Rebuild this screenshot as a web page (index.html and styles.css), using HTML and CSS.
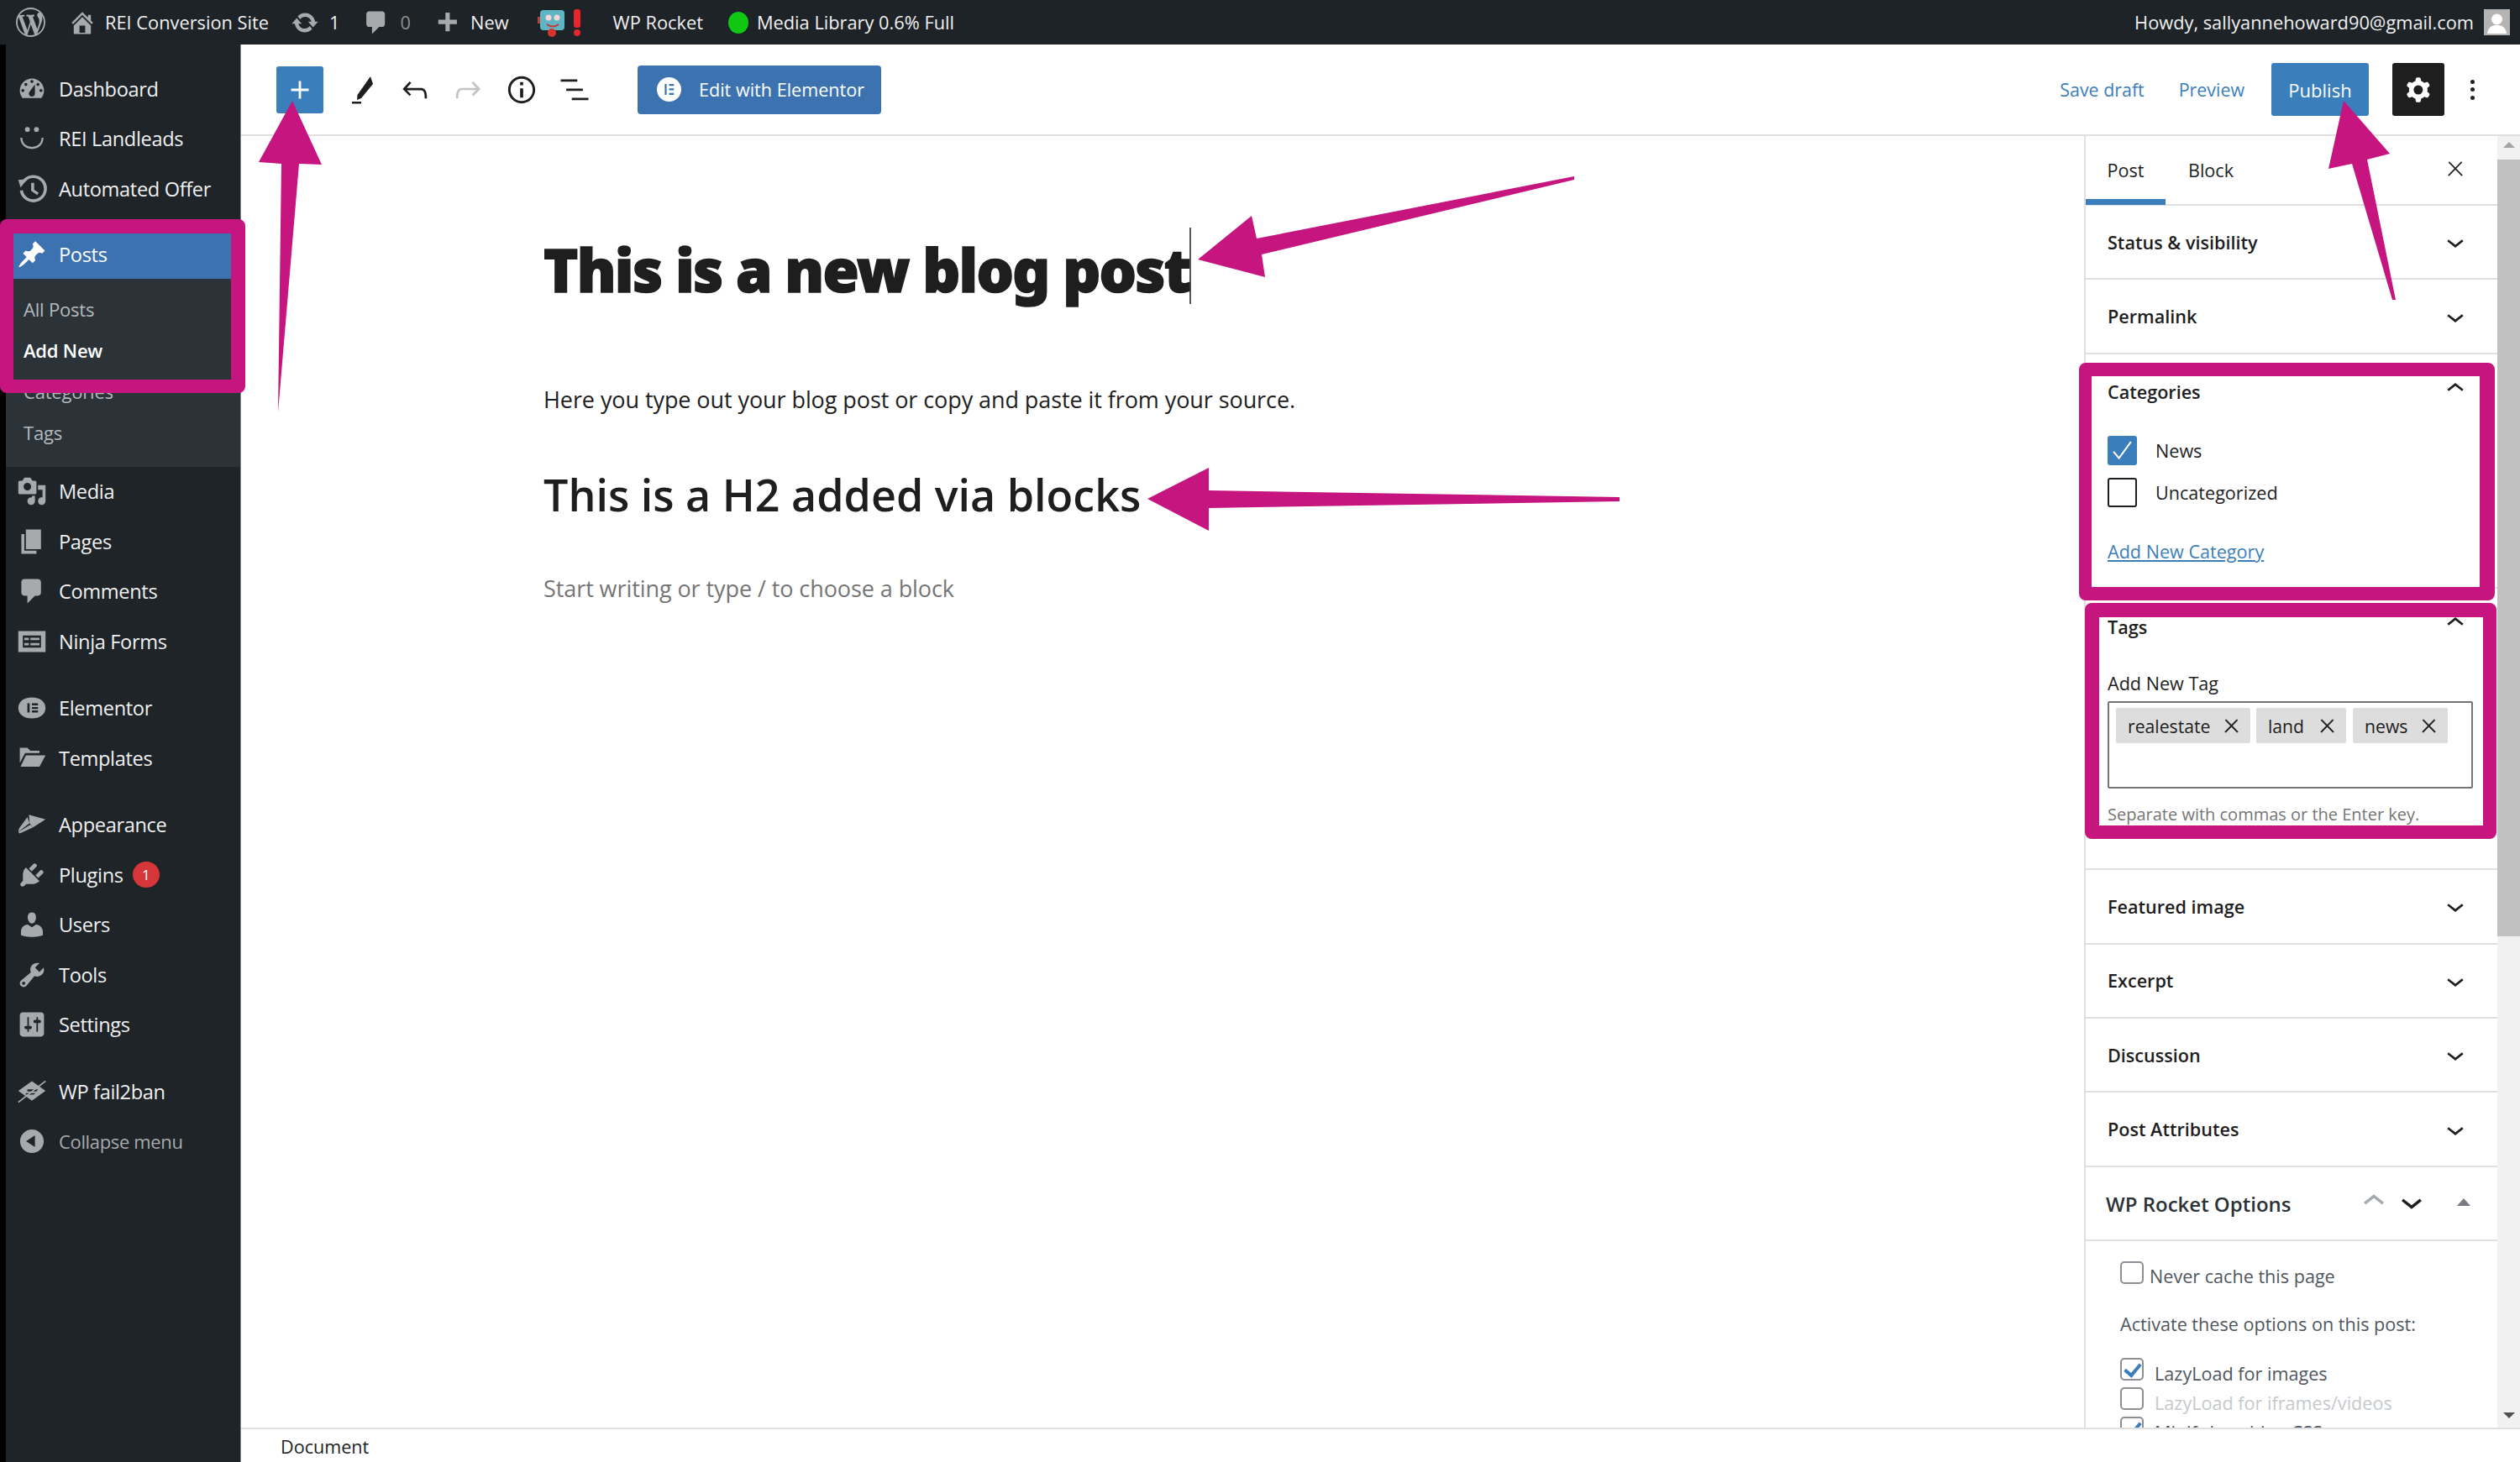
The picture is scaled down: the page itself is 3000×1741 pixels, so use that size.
FILE: index.html
```html
<!DOCTYPE html>
<html lang="en">
<head>
  <meta charset="UTF-8">
  <title>Add New Post</title>
  <link rel="stylesheet" href="styles.css">
</head>
<body>
  <svg class="sprites" width="0" height="0">
    <symbol id="chev-down" viewBox="0 0 24 24"><path d="M17.5 11.6L12 16l-5.5-4.4.9-1.2L12 14l4.5-3.6 1 1.2z"/></symbol>
    <symbol id="chev-up" viewBox="0 0 24 24"><path d="M6.5 12.4L12 8l5.5 4.4-.9 1.2L12 10l-4.5 3.6-1-1.2z"/></symbol>
    <symbol id="close" viewBox="0 0 24 24"><path d="M13 11.8l6.1-6.3-1-1-6.1 6.2-6.1-6.2-1 1 6.1 6.3-6.5 6.7 1 1 6.5-6.6 6.5 6.6 1-1z"/></symbol>
  </svg>

  <header class="adminbar">
    <svg class="ab-logo" viewBox="0 0 20 20"><path d="M20 10c0-5.51-4.49-10-10-10C4.48 0 0 4.49 0 10c0 5.52 4.48 10 10 10 5.51 0 10-4.48 10-10zM7.78 15.37L4.37 6.22c.55-.02 1.17-.08 1.17-.08.5-.06.44-1.13-.06-1.11 0 0-1.45.11-2.37.11-.18 0-.37 0-.58-.01C4.12 2.69 6.87 1.11 10 1.11c2.33 0 4.45.87 6.05 2.34-.68-.11-1.65.39-1.65 1.58 0 .74.45 1.36.9 2.1.35.61.55 1.36.55 2.46 0 1.49-1.4 5-1.4 5l-3.03-8.37c.54-.02.82-.17.82-.17.5-.05.44-1.25-.06-1.22 0 0-1.44.12-2.38.12-.87 0-2.33-.12-2.33-.12-.5-.03-.56 1.2-.06 1.22l.92.08 1.26 3.41zM17.41 10c.24-.64.74-1.87.43-4.25.7 1.29 1.05 2.71 1.05 4.25 0 3.29-1.73 6.24-4.4 7.78.97-2.59 1.94-5.2 2.92-7.78zM6.1 18.09C3.12 16.65 1.11 13.53 1.11 10c0-1.3.23-2.48.72-3.59C3.25 10.3 4.67 14.2 6.1 18.09zm4.03-6.63l2.58 6.98c-.86.29-1.76.45-2.71.45-.79 0-1.57-.11-2.29-.33.81-2.38 1.62-4.74 2.42-7.1z"/></svg>
    <div class="ab-item ab-site">
      <svg class="ab-icon" viewBox="0 0 20 20"><path d="M16 8.5l1.53 1.53-1.06 1.06L10 4.62l-6.47 6.47-1.06-1.06L10 2.5l4 4v-2h2v4zm-6-2.46l6 5.99V18H4v-5.97zM12 17v-5H8v5h4z"/></svg>
      <span>REI Conversion Site</span>
    </div>
    <div class="ab-item ab-updates">
      <svg class="ab-icon" viewBox="0 0 20 20"><path d="M10.2 3.28c3.53 0 6.43 2.61 6.92 6h2.08l-3.5 4-3.5-4h2.32c-.45-1.97-2.21-3.45-4.32-3.45-1.45 0-2.73.71-3.54 1.78L4.95 5.66C6.23 4.2 8.11 3.28 10.2 3.28zm-.4 13.44c-3.52 0-6.43-2.61-6.92-6H.8l3.5-4c1.17 1.33 2.33 2.67 3.5 4H5.48c.45 1.97 2.21 3.45 4.32 3.45 1.45 0 2.73-.71 3.54-1.78l1.71 1.95c-1.28 1.46-3.15 2.38-5.25 2.38z"/></svg>
      <span>1</span>
    </div>
    <div class="ab-item ab-comments">
      <svg class="ab-icon" viewBox="0 0 20 20"><path d="M5 2h9c1.1 0 2 .9 2 2v7c0 1.1-.9 2-2 2h-2l-5 5v-5H5c-1.1 0-2-.9-2-2V4c0-1.1.9-2 2-2z"/></svg>
      <span class="dim">0</span>
    </div>
    <div class="ab-item ab-new">
      <svg class="ab-icon" viewBox="0 0 20 20"><path d="M12 8h5v3h-5v5H9v-5H4V8h5V3h3z"/></svg>
      <span>New</span>
    </div>
    <div class="ab-item ab-rocket">
      <svg class="ab-robot" viewBox="0 0 56 34">
        <rect x="0" y="10" width="4" height="8" fill="#b8433c"/>
        <rect x="3" y="2" width="29" height="24" rx="4" fill="#5fb5c4"/>
        <circle cx="13" cy="11" r="3.5" fill="#f3d6d6"/><circle cx="23" cy="11" r="3.5" fill="#f3d6d6"/>
        <path d="M11 19q7 5 14 0" stroke="#c33" stroke-width="2" fill="none"/>
        <circle cx="17" cy="29" r="5" fill="#d9332b"/>
        <rect x="43" y="1" width="8" height="22" rx="3" fill="#e8242c"/>
        <circle cx="47" cy="29" r="4" fill="#e8242c"/>
      </svg>
      <span>WP Rocket</span>
    </div>
    <div class="ab-item ab-media">
      <i class="green-dot"></i>
      <span>Media Library 0.6% Full</span>
    </div>
    <div class="ab-item ab-howdy">
      <span>Howdy, sallyannehoward90@gmail.com</span>
      <svg class="ab-avatar" viewBox="0 0 31 31">
        <rect width="31" height="31" fill="#b4b4b4"/>
        <circle cx="15.5" cy="12" r="6.5" fill="#fff"/>
        <path d="M4 29c1-8 6-10 11.500-10S26 21 27 29z" fill="#fff"/>
      </svg>
    </div>
  </header>

  <div class="layout">
    <nav class="sidemenu">
      <a class="menu-item">
        <svg class="menu-icon" viewBox="0 0 20 20"><path d="M3.760 16h12.480c1.100-1.370 1.760-3.110 1.760-5 0-4.420-3.580-8-8-8s-8 3.580-8 8c0 1.890.66 3.630 1.760 5zM10 4c.55 0 1 .45 1 1s-.45 1-1 1-1-.45-1-1 .45-1 1-1zM6 6c.55 0 1 .45 1 1s-.45 1-1 1-1-.45-1-1 .45-1 1-1zm8 0c.55 0 1 .45 1 1s-.45 1-1 1-1-.45-1-1 .45-1 1-1zm-5.370 5.550L12 7v6c0 1.100-.9 2-2 2s-2-.9-2-2c0-.57.24-1.080.63-1.450zM4 10c.55 0 1 .45 1 1s-.45 1-1 1-1-.45-1-1 .45-1 1-1zm12 0c.55 0 1 .45 1 1s-.45 1-1 1-1-.45-1-1 .45-1 1-1z"/></svg>
        <span>Dashboard</span>
      </a>
      <a class="menu-item">
        <svg class="menu-icon" viewBox="0 0 20 20"><circle cx="7" cy="4" r="1.600"/><circle cx="13" cy="4" r="1.600"/><path d="M3 9.500c0 9 14 9 14 0" fill="none" stroke="#a7aaad" stroke-width="1.300"/></svg>
        <span>REI Landleads</span>
      </a>
      <a class="menu-item">
        <svg class="menu-icon" viewBox="0 0 20 20"><path d="M4.500 5A8 8 0 1 1 3 11" fill="none" stroke="#a7aaad" stroke-width="2"/><path d="M1 4l6-.5L2.500 9z"/><path d="M9.500 6h2v4.500l3 2-1 1.500-4-2.700z"/></svg>
        <span>Automated Offer</span>
      </a>
      <div class="menu-sep"></div>
      <a class="menu-item current">
        <svg class="menu-icon" viewBox="0 0 20 20"><path d="M10.440 3.020l1.820-1.820 6.360 6.350-1.830 1.820c-1.050-.68-2.480-.57-3.410.36l-.75.75c-.92.93-1.040 2.350-.35 3.410l-1.830 1.820-2.410-2.410-2.800 2.790c-.42.42-3.380 2.710-3.800 2.290s1.860-3.390 2.280-3.810l2.790-2.790L4.100 9.360l1.830-1.820c1.050.69 2.480.57 3.400-.36l.75-.75c.93-.92 1.050-2.350.36-3.410z"/></svg>
        <span>Posts</span>
      </a>
      <ul class="submenu">
        <li>All Posts</li>
        <li class="active">Add New</li>
        <li>Categories</li>
        <li>Tags</li>
      </ul>
      <a class="menu-item">
        <svg class="menu-icon" viewBox="0 0 20 20"><path d="M13 11V4c0-.55-.45-1-1-1h-1.670L9 1H5L3.670 3H2c-.55 0-1 .45-1 1v7c0 .55.45 1 1 1h10c.55 0 1-.45 1-1zM7 4.500c1.380 0 2.500 1.120 2.500 2.500S8.380 9.500 7 9.500 4.500 8.380 4.500 7 5.620 4.500 7 4.500zM14 6h5v10.500c0 1.380-1.120 2.500-2.500 2.500S14 17.880 14 16.500s1.120-2.500 2.500-2.500c.17 0 .34.02.5.05V9h-3V6zm-4 8.050V13h2v3.500c0 1.380-1.120 2.500-2.500 2.500S7 17.880 7 16.500 8.120 14 9.500 14c.17 0 .34.02.5.05z"/></svg>
        <span>Media</span>
      </a>
      <a class="menu-item">
        <svg class="menu-icon" viewBox="0 0 20 20"><path d="M6 15V2h10v13H6zm-1 1h8v2H3V5h2v11z"/></svg>
        <span>Pages</span>
      </a>
      <a class="menu-item">
        <svg class="menu-icon" viewBox="0 0 20 20"><path d="M5 2h9c1.100 0 2 .9 2 2v7c0 1.100-.9 2-2 2h-2l-5 5v-5H5c-1.100 0-2-.9-2-2V4c0-1.100.9-2 2-2z"/></svg>
        <span>Comments</span>
      </a>
      <a class="menu-item">
        <svg class="menu-icon" viewBox="0 0 20 20"><path fill-rule="evenodd" d="M1 3h18v14H1zM4 6v8h12V6zM5 7.500h3V9H5zM9 7.500h6V9H9zM5 11h3v1.500H5zM9 11h6v1.500H9z"/></svg>
        <span>Ninja Forms</span>
      </a>
      <div class="menu-sep"></div>
      <a class="menu-item">
        <svg class="menu-icon" viewBox="0 0 20 20"><path fill-rule="evenodd" d="M10 3c5.500 0 9 3 9 7s-3.500 7-9 7-9-3-9-7 3.500-7 9-7zM7 7v6h1.500V7zM10 7v1.300h4V7zM10 9.400v1.300h4V9.400zM10 11.700V13h4v-1.300z"/></svg>
        <span>Elementor</span>
      </a>
      <a class="menu-item">
        <svg class="menu-icon" viewBox="0 0 20 20"><path d="M2 3h5l2 2h6v1.500H5.500L2 13zM6 8h13l-4 7.500H2.500z"/></svg>
        <span>Templates</span>
      </a>
      <div class="menu-sep"></div>
      <a class="menu-item">
        <svg class="menu-icon" viewBox="0 0 20 20"><path d="M8 3.500L19 6.500l-8.500 5.500-2-3zM7 5l1.500 4L4 12.500 1 15l.5-2.500z"/><path d="M1 15l8-5 1.500 2L2 15.800z"/></svg>
        <span>Appearance</span>
      </a>
      <a class="menu-item">
        <svg class="menu-icon" viewBox="0 0 20 20"><path d="M13.110 4.360L9.870 7.600 8 5.730l3.240-3.240c.35-.34 1.050-.2 1.560.32.52.51.66 1.210.31 1.550zm-8 1.770l.91-1.120 9.010 9.010-1.190.84c-.71.71-2.630 1.160-3.820 1.160H6.140L4.900 17.260c-.59.59-1.540.59-2.120 0-.59-.58-.59-1.530 0-2.120l1.240-1.240v-3.880c0-1.130.4-3.190 1.090-3.890zm7.260 3.970l3.240-3.240c.34-.35 1.040-.21 1.550.31.52.51.66 1.210.31 1.550l-3.240 3.250z"/></svg>
        <span>Plugins</span>
        <b class="badge">1</b>
      </a>
      <a class="menu-item">
        <svg class="menu-icon" viewBox="0 0 20 20"><path d="M10 9.250c-2.270 0-2.730-3.440-2.730-3.440C7 4.020 7.820 2 9.970 2c2.160 0 2.980 2.020 2.710 3.810 0 0-.41 3.440-2.680 3.440zm0 2.570L12.720 10c2.390 0 4.520 2.330 4.520 4.530v2.490s-3.650 1.130-7.240 1.130c-3.650 0-7.240-1.130-7.240-1.130v-2.490c0-2.250 1.940-4.480 4.470-4.480z"/></svg>
        <span>Users</span>
      </a>
      <a class="menu-item">
        <svg class="menu-icon" viewBox="0 0 20 20"><path d="M16.680 9.770c-1.340 1.340-3.300 1.670-4.950.99l-5.410 6.520c-.99.99-2.590.99-3.580 0s-.99-2.59 0-3.570l6.520-5.420c-.68-1.650-.35-3.610.99-4.950 1.280-1.280 3.120-1.620 4.720-1.060l-2.890 2.890 2.820 2.820 2.860-2.870c.53 1.580.18 3.390-1.080 4.650zM3.810 16.210c.4.39 1.040.39 1.430 0 .4-.4.4-1.040 0-1.430-.39-.4-1.030-.4-1.430 0-.39.39-.39 1.030 0 1.430z"/></svg>
        <span>Tools</span>
      </a>
      <a class="menu-item">
        <svg class="menu-icon" viewBox="0 0 20 20"><path d="M18 16V4c0-1.100-.9-2-2-2H4c-1.100 0-2 .9-2 2v12c0 1.100.9 2 2 2h12c1.100 0 2-.9 2-2zM8 11h1c.55 0 1 .45 1 1s-.45 1-1 1H8v1.500c0 .28-.22.5-.5.5s-.5-.22-.5-.5V13H6c-.55 0-1-.45-1-1s.45-1 1-1h1V5.500c0-.28.22-.5.5-.5s.5.22.5.5V11zm5-2h-1c-.55 0-1-.45-1-1s.45-1 1-1h1V5.500c0-.28.22-.5.5-.5s.5.22.5.5V7h1c.55 0 1 .45 1 1s-.45 1-1 1h-1v5.500c0 .28-.22.5-.5.5s-.5-.22-.5-.5V9z"/></svg>
        <span>Settings</span>
      </a>
      <div class="menu-sep"></div>
      <a class="menu-item">
        <svg class="menu-icon" viewBox="0 0 20 20"><path fill-rule="evenodd" d="M10 3l9 6.500L10 16 1 9.500zM7 8.500v1.300h6l1-1.300zM6 11v1h5l1.500-1z"/><path d="M1 17L19 3" stroke="#a7aaad" stroke-width="1"/></svg>
        <span>WP fail2ban</span>
      </a>
      <a class="menu-item collapse">
        <svg class="menu-icon" viewBox="0 0 20 20"><path d="M10 2.160c4.330 0 7.840 3.510 7.840 7.840s-3.510 7.840-7.840 7.840S2.160 14.330 2.160 10 5.710 2.160 10 2.160zm2 11.720V6.120L6.180 9.970z"/></svg>
        <span>Collapse menu</span>
      </a>
    </nav>

    <main class="editor">
      <div class="toolbar">
        <button class="btn-inserter">
          <svg viewBox="0 0 24 24"><path d="M18 11.200h-5.200V6h-1.600v5.200H6v1.600h5.200V18h1.600v-5.200H18z"/></svg>
        </button>
        <div class="tools">
          <span class="tool"><svg viewBox="0 0 28 34"><path d="M24 1l3 9-14 17-5 2 .5-6z"/><rect x="2" y="31" width="11" height="2.500"/></svg></span>
          <span class="tool"><svg class="tool-large" viewBox="0 0 24 24"><path d="M18.300 11.700c-.6-.6-1.400-.9-2.300-.9H6.700l2.900-3.300-1.100-1-4.500 5L8.500 16l1-1-2.700-2.700H16c.5 0 .9.2 1.300.5 1 1 1 3.400 1 4.500v.3h1.500v-.2c0-1.500 0-4.300-1.500-5.700z"/></svg></span>
          <span class="tool disabled"><svg class="tool-large" viewBox="0 0 24 24"><path d="M15.600 6.500l-1.100 1 2.900 3.300H8c-.9 0-1.700.3-2.300.9-1.400 1.500-1.400 4.200-1.400 5.600v.2h1.500v-.3c0-1.100 0-3.500 1-4.500.3-.3.7-.5 1.300-.5h9.200L14.500 15l1.100 1.100 4.600-4.600-4.600-5z"/></svg></span>
          <span class="tool"><svg class="tool-large" viewBox="0 0 24 24"><path d="M12 3.200c-4.800 0-8.800 3.900-8.800 8.800 0 4.800 3.900 8.800 8.800 8.800 4.800 0 8.800-3.900 8.800-8.800 0-4.800-4-8.800-8.800-8.800zm0 16c-4 0-7.200-3.300-7.200-7.200C4.800 8 8 4.800 12 4.800s7.200 3.300 7.200 7.200c0 4-3.200 7.200-7.200 7.200zM11 17h2v-6h-2v6zm0-8h2V7h-2v2z"/></svg></span>
          <span class="tool"><svg class="tool-large" viewBox="0 0 24 24"><path d="M13.800 5.200H3v1.500h10.800V5.200zm-3.600 12v1.500H21v-1.500H10.200zm7.200-6H6.600v1.500h10.800v-1.500z"/></svg></span>
        </div>
        <button class="btn-elementor">
          <svg viewBox="0 0 20 20"><path fill-rule="evenodd" d="M10 0a10 10 0 1 1 0 20 10 10 0 0 1 0-20zM6.500 5.500v9H8v-9zM10 5.500V7h4V5.500zM10 9.200v1.500h4V9.200zM10 13v1.500h4V13z"/></svg>
          <span>Edit with Elementor</span>
        </button>
        <div class="toolbar-right">
          <a class="link-btn">Save draft</a>
          <a class="link-btn">Preview</a>
          <button class="btn-publish">Publish</button>
          <button class="btn-settings">
            <svg viewBox="0 0 24 24"><path fill-rule="evenodd" d="M10.289 4.836A1 1 0 0111.275 4h1.306a1 1 0 01.987.836l.244 1.466c.787.26 1.503.679 2.108 1.218l1.393-.522a1 1 0 011.216.437l.653 1.13a1 1 0 01-.23 1.273l-1.148.944a6.025 6.025 0 010 2.435l1.149.946a1 1 0 01.23 1.272l-.653 1.13a1 1 0 01-1.216.437l-1.394-.522c-.605.54-1.32.958-2.108 1.218l-.244 1.466a1 1 0 01-.987.836h-1.306a1 1 0 01-.986-.836l-.244-1.466a5.995 5.995 0 01-2.108-1.218l-1.394.522a1 1 0 01-1.217-.436l-.653-1.131a1 1 0 01.23-1.272l1.149-.946a6.026 6.026 0 010-2.435l-1.148-.944a1 1 0 01-.23-1.272l.653-1.131a1 1 0 011.217-.437l1.393.522a5.994 5.994 0 012.108-1.218l.244-1.466zM14.929 12a3 3 0 11-6 0 3 3 0 016 0z"/></svg>
          </button>
          <div class="dots"><i></i><i></i><i></i></div>
        </div>
      </div>

      <div class="editor-body">
        <section class="canvas">
          <h1 class="post-title">This is a new blog post</h1>
          <p class="para">Here you type out your blog post or copy and paste it from your source.</p>
          <h2 class="heading2">This is a H2 added via blocks</h2>
          <p class="para placeholder">Start writing or type / to choose a block</p>
        </section>

        <aside class="panel">
          <div class="tabs">
            <span class="tab on">Post</span>
            <span class="tab">Block</span>
            <svg class="tab-close"><use href="#close"/></svg>
          </div>
          <div class="row"><span>Status &amp; visibility</span><svg class="chev"><use href="#chev-down"/></svg></div>
          <div class="row"><span>Permalink</span><svg class="chev"><use href="#chev-down"/></svg></div>

          <div class="row-open cats">
            <div class="open-head"><span>Categories</span><svg class="chev"><use href="#chev-up"/></svg></div>
            <div class="cat"><i class="box checked"><svg viewBox="0 0 24 24"><path d="M4 13l5 6L20 4" fill="none" stroke="#fff" stroke-width="1.600"/></svg></i><span>News</span></div>
            <div class="cat"><i class="box"></i><span>Uncategorized</span></div>
            <a class="add-cat">Add New Category</a>
          </div>

          <div class="row-open tags">
            <div class="open-head"><span>Tags</span><svg class="chev"><use href="#chev-up"/></svg></div>
            <div class="tag-label">Add New Tag</div>
            <div class="tag-input">
              <span class="chip chip-a">realestate<svg><use href="#close"/></svg></span>
              <span class="chip chip-b">land<svg><use href="#close"/></svg></span>
              <span class="chip chip-c">news<svg><use href="#close"/></svg></span>
            </div>
            <div class="tag-help">Separate with commas or the Enter key.</div>
          </div>

          <div class="row"><span>Featured image</span><svg class="chev"><use href="#chev-down"/></svg></div>
          <div class="row"><span>Excerpt</span><svg class="chev"><use href="#chev-down"/></svg></div>
          <div class="row"><span>Discussion</span><svg class="chev"><use href="#chev-down"/></svg></div>
          <div class="row"><span>Post Attributes</span><svg class="chev"><use href="#chev-down"/></svg></div>
          <div class="row rocket-row">
            <span class="rocket-title">WP Rocket Options</span>
            <svg class="chev-big muted"><use href="#chev-up"/></svg>
            <svg class="chev-big"><use href="#chev-down"/></svg>
            <i class="tri-up"></i>
          </div>
          <div class="rocket-opts">
            <div class="opt never"><i class="wpbox"></i><span>Never cache this page</span></div>
            <div class="opt-note">Activate these options on this post:</div>
            <div class="opt lazy"><i class="wpbox on"></i><span>LazyLoad for images</span></div>
            <div class="opt lazy off"><i class="wpbox"></i><span>LazyLoad for iframes/videos</span></div>
            <div class="opt lazy"><i class="wpbox on"></i><span>Minify/combine CSS</span></div>
          </div>
        </aside>

        <div class="scrollbar">
          <i class="sb-up"></i>
          <div class="sb-thumb"></div>
          <i class="sb-down"></i>
        </div>
      </div>

      <footer class="crumbs"><span>Document</span></footer>
    </main>
  </div>

  <!-- hand drawn callouts on top of the screenshot -->
  <div class="callout callout-menu"></div>
  <div class="callout callout-cats"></div>
  <div class="callout callout-tags"></div>
  <svg class="arrows" viewBox="0 0 3000 1741">
    <polygon points="348,120 383,196 356,195 331,491 335,195 308,193"/>
    <polygon points="1426,309 1490,257 1496,284 1874,210 1874,214 1502,303 1506,330"/>
    <polygon points="1366,594 1439,557 1439,584 1928,592 1928,597 1439,605 1439,632"/>
    <polygon points="2790,120 2845,183 2818,190 2852,357 2848,357 2800,195 2772,201"/>
  </svg>
</body>
</html>
```

FILE: styles.css
```css
* {
  box-sizing: border-box;
}
html, body {
  margin: 0;
  padding: 0;
  width: 3000px;
  height: 1741px;
  overflow: hidden;
}
body {
  position: relative;
  background: #fff;
  color: #1e1e1e;
  font-family: "Open Sans", "Noto Sans", sans-serif;
}
.sprites {
  position: absolute;
}
button {
  font-family: inherit;
  border: none;
  padding: 0;
}

/* Top admin bar */
.adminbar {
  display: flex;
  align-items: center;
  height: 53px;
  background: #1d2327;
  color: #f0f0f1;
  font-size: 21.8px;
  padding-left: 19px;
}
.ab-logo {
  width: 35px;
  height: 35px;
  fill: #a7aaad;
}
.ab-item {
  display: flex;
  align-items: center;
}
.ab-icon {
  width: 34px;
  height: 34px;
  fill: #a7aaad;
}
.ab-site { margin-left: 27px; gap: 10px; }
.ab-updates { margin-left: 26px; gap: 12px; }
.ab-comments { margin-left: 26px; gap: 12px; }
.ab-new { margin-left: 26px; gap: 11px; }
.ab-rocket { margin-left: 34px; gap: 34px; }
.ab-media { margin-left: 30px; gap: 10px; }
.ab-howdy { margin-left: auto; margin-right: 12px; gap: 12px; }
.dim { color: #8c8f94; }
.ab-robot {
  width: 56px;
  height: 34px;
}
.green-dot {
  width: 24px;
  height: 26px;
  border-radius: 50%;
  background: #12c712;
  box-shadow: 0 0 0 1px #123;
}
.ab-avatar {
  width: 31px;
  height: 31px;
}

.layout {
  display: flex;
  height: 1688px;
  background: #000;
  padding-left: 7px;
}

/* Left menu */
.sidemenu {
  flex: none;
  width: 280px;
  background: #1e2428;
  padding-top: 23px;
  color: #f0f0f1;
  font-size: 23.6px;
  letter-spacing: -0.35px;
  border-right: 1px solid #8a8f94;
}
.menu-item {
  display: flex;
  align-items: center;
  height: 59.5px;
  padding-left: 13px;
}
.menu-icon {
  flex: none;
  width: 36px;
  height: 36px;
  margin-right: 14px;
  fill: #a7aaad;
}
.menu-sep {
  height: 20px;
}
.menu-item.current {
  height: 57px;
  background: #3c72b0;
  color: #fff;
}
.current .menu-icon {
  fill: #fff;
}
.submenu {
  list-style: none;
  margin: 0;
  padding: 12px 0 16px 21px;
  background: #2c3338;
  font-size: 22px;
  letter-spacing: -0.2px;
  color: #b4b9be;
}
.submenu li {
  height: 49px;
  line-height: 49px;
}
.submenu .active {
  color: #fff;
  font-weight: 600;
}
.badge {
  display: block;
  width: 32px;
  height: 31px;
  margin-left: 11px;
  border-radius: 50%;
  background: #d63638;
  color: #fff;
  font-size: 17px;
  font-weight: 400;
  line-height: 31px;
  text-align: center;
}
.collapse {
  color: #a7aaad;
  font-size: 22px;
}

/* Editor */
.editor {
  flex: 1;
  display: flex;
  flex-direction: column;
  background: #fff;
  min-width: 0;
}
.toolbar {
  flex: none;
  display: flex;
  align-items: center;
  height: 109px;
  padding-left: 42px;
  border-bottom: 2px solid #e0e0e0;
}
.btn-inserter {
  display: flex;
  align-items: center;
  justify-content: center;
  width: 56px;
  height: 56px;
  border-radius: 3px;
  background: #3a7ebc;
}
.btn-inserter svg {
  width: 42px;
  height: 42px;
  fill: #fff;
}
.tools {
  display: flex;
  margin-left: 14px;
}
.tool {
  display: flex;
  align-items: center;
  justify-content: center;
  width: 63.4px;
  height: 56px;
}
.tool svg {
  width: 28px;
  height: 34px;
  fill: #1e1e1e;
}
.tool svg.tool-large {
  width: 44px;
  height: 44px;
}
.tool.disabled svg {
  fill: #c4c4c4;
}
.btn-elementor {
  display: flex;
  align-items: center;
  width: 290px;
  height: 58px;
  margin-left: 43px;
  padding-left: 23px;
  border-radius: 4px;
  background: #3c72b0;
  color: #fff;
  font-size: 21.6px;
}
.btn-elementor svg {
  width: 29px;
  height: 29px;
  margin-right: 21px;
  fill: #fff;
}
.toolbar-right {
  display: flex;
  align-items: center;
  margin-left: auto;
  padding-right: 44px;
}
.link-btn {
  color: #3a7ebc;
  font-size: 21.4px;
  margin-right: 41px;
}
.btn-publish {
  width: 116px;
  height: 63px;
  margin-left: -9px;
  border-radius: 3px;
  background: #3a7ebc;
  color: #fff;
  font-size: 22px;
}
.btn-settings {
  display: flex;
  align-items: center;
  justify-content: center;
  width: 62px;
  height: 63px;
  margin-left: 28px;
  border-radius: 3px;
  background: #1e1e1e;
}
.btn-settings svg {
  width: 44px;
  height: 44px;
  fill: #fff;
}
.dots {
  display: flex;
  flex-direction: column;
  align-items: center;
  justify-content: space-between;
  width: 26px;
  height: 24px;
  margin-left: 20px;
}
.dots i {
  width: 5px;
  height: 5px;
  border-radius: 50%;
  background: #1e1e1e;
}

.editor-body {
  flex: 1;
  display: flex;
  min-height: 0;
  overflow: hidden;
}

/* Writing area */
.canvas {
  flex: 1;
  padding: 109px 0 0 360px;
}
.post-title {
  display: inline-block;
  margin: 0;
  padding-top: 10px;
  font-family: "Noto Sans", "Open Sans", sans-serif;
  font-size: 70px;
  font-weight: 900;
  letter-spacing: -1.7px;
  line-height: 81px;
  -webkit-text-stroke: 1.5px #1e1e1e;
  border-right: 2px solid #555;
}
.para {
  margin: 94px 0 0;
  font-size: 27px;
  letter-spacing: -0.08px;
  line-height: 40px;
}
.heading2 {
  margin: 63px 0 0;
  font-size: 52px;
  font-weight: 600;
  line-height: 60px;
}
.placeholder {
  margin-top: 62px;
  color: #757575;
}

/* Settings panel */
.panel {
  flex: none;
  width: 492px;
  border-left: 2px solid #e0e0e0;
  font-size: 21.6px;
  overflow: hidden;
}
.tabs {
  position: relative;
  display: flex;
  align-items: center;
  height: 83px;
  border-bottom: 2px solid #e0e0e0;
}
.tab {
  display: flex;
  align-items: center;
  justify-content: center;
  height: 83px;
  color: #1e1e1e;
}
.tab:nth-child(1) {
  width: 95px;
}
.tab:nth-child(2) {
  width: 108px;
}
.tab.on {
  border-bottom: 7px solid #3a7ebc;
  padding-top: 7px;
}
.tab-close {
  width: 28px;
  height: 28px;
  margin-left: auto;
  margin-right: 36px;
  margin-top: -4px;
  fill: #1e1e1e;
}
.row {
  display: flex;
  align-items: center;
  justify-content: space-between;
  height: 88.4px;
  padding: 0 29px 0 26px;
  border-bottom: 2px solid #e0e0e0;
  font-weight: 600;
}
.chev {
  width: 42px;
  height: 42px;
  fill: #1e1e1e;
}
.row-open {
  padding: 0 29px 0 26px;
  border-bottom: 2px solid #e0e0e0;
}
.open-head {
  display: flex;
  align-items: center;
  justify-content: space-between;
  height: 90px;
  font-weight: 600;
}
.open-head .chev {
  margin-top: -8px;
}
.cats {
  height: 279.5px;
}
.cat {
  display: flex;
  align-items: center;
  gap: 22px;
  height: 35px;
  margin-bottom: 15px;
}
.cats .open-head {
  margin-bottom: 7px;
}
.box {
  flex: none;
  width: 35px;
  height: 35px;
  border: 2px solid #1e1e1e;
  border-radius: 3px;
}
.box.checked {
  background: #3a7ebc;
  border-color: #3a7ebc;
}
.box svg {
  display: block;
}
.add-cat {
  display: block;
  margin-top: 37px;
  color: #3a7ebc;
  text-decoration: underline;
  line-height: 32px;
}
.tags {
  height: 335px;
}
.tag-label {
  margin-top: -2px;
  line-height: 50px;
}
.tag-input {
  display: flex;
  gap: 7px;
  height: 104px;
  padding: 6px 8px;
  border: 2px solid #757575;
  border-radius: 2px;
  margin-top: -4px;
}
.chip {
  display: flex;
  align-items: center;
  justify-content: space-between;
  height: 42px;
  padding-left: 14px;
  padding-right: 10px;
  border-radius: 2px;
  background: #ddd;
  font-size: 21.2px;
}
.chip svg {
  width: 25px;
  height: 25px;
  fill: #1e1e1e;
  stroke: #1e1e1e;
  stroke-width: 0.6;
}
.chip-a { width: 160px; }
.chip-b { width: 107px; }
.chip-c { width: 113px; margin-left: 1px; }
.tag-help {
  margin-top: 15px;
  color: #757575;
  font-size: 20px;
  line-height: 32px;
}
.rocket-row {
  justify-content: flex-start;
  padding-left: 24px;
}
.rocket-title {
  flex: none;
  width: 293px;
  font-size: 24px;
  font-weight: 600;
  white-space: nowrap;
  color: #2c3338;
}
.chev-big {
  width: 52px;
  height: 52px;
  fill: #1e1e1e;
  margin-right: -7px;
  margin-top: -4px;
}
.chev-big.muted {
  fill: #a7aaad;
}
.tri-up {
  width: 0;
  height: 0;
  margin-left: 35px;
  margin-top: -4px;
  border: 8px solid transparent;
  border-top: none;
  border-bottom: 9px solid #787c82;
}
.rocket-opts {
  padding: 19px 0 0 41px;
  color: #50575e;
  font-size: 21.6px;
}
.opt {
  display: flex;
  align-items: flex-end;
}
.wpbox {
  flex: none;
  width: 28px;
  height: 27px;
  border: 2px solid #8c8f94;
  border-radius: 5px;
  position: relative;
  background: #fff;
}
.wpbox.on::after {
  content: "";
  position: absolute;
  left: 7px;
  top: 1px;
  width: 8px;
  height: 15px;
  border: solid #3a7ebc;
  border-width: 0 4px 4px 0;
  transform: rotate(40deg);
}
.never {
  height: 32px;
  gap: 7px;
}
.never span {
  line-height: 26px;
  margin-bottom: -4px;
}
.opt-note {
  margin-top: 31px;
  line-height: 34px;
}
.lazy {
  gap: 13px;
  height: 35px;
}
.lazy span {
  line-height: 26px;
  margin-bottom: -5px;
}
.opt-note + .lazy {
  margin-top: 15px;
}
.lazy.off {
  color: #c5c9cc;
}

/* Scrollbar */
.scrollbar {
  flex: none;
  position: relative;
  width: 27px;
  background: #f1f1f1;
  padding-top: 28px;
}
.sb-thumb {
  height: 925px;
  background: #c1c1c1;
}
.sb-up, .sb-down {
  position: absolute;
  left: 7px;
  border: 7px solid transparent;
}
.sb-up {
  top: 7px;
  border-top: none;
  border-bottom: 7px solid #a3a3a3;
}
.sb-down {
  bottom: 11px;
  border-bottom: none;
  border-top: 7px solid #505050;
}

.crumbs {
  flex: none;
  height: 41px;
  padding-left: 47px;
  border-top: 2px solid #e0e0e0;
  font-size: 21.6px;
  line-height: 42px;
  position: relative;
}

/* Callouts */
.callout {
  position: absolute;
  border-style: solid;
  border-color: #c7157f;
  border-radius: 8px;
}
.callout-menu {
  left: 0;
  top: 261px;
  width: 292px;
  height: 207px;
  border-width: 17px 17px 16px 16px;
}
.callout-cats {
  left: 2475px;
  top: 432px;
  width: 495px;
  height: 283px;
  border-width: 16px 18px 16px 15px;
}
.callout-tags {
  left: 2482px;
  top: 718px;
  width: 490px;
  height: 281px;
  border-width: 17px 16px 16px 17px;
}
.arrows {
  position: absolute;
  left: 0;
  top: 0;
  width: 3000px;
  height: 1741px;
  fill: #c7157f;
}
```
